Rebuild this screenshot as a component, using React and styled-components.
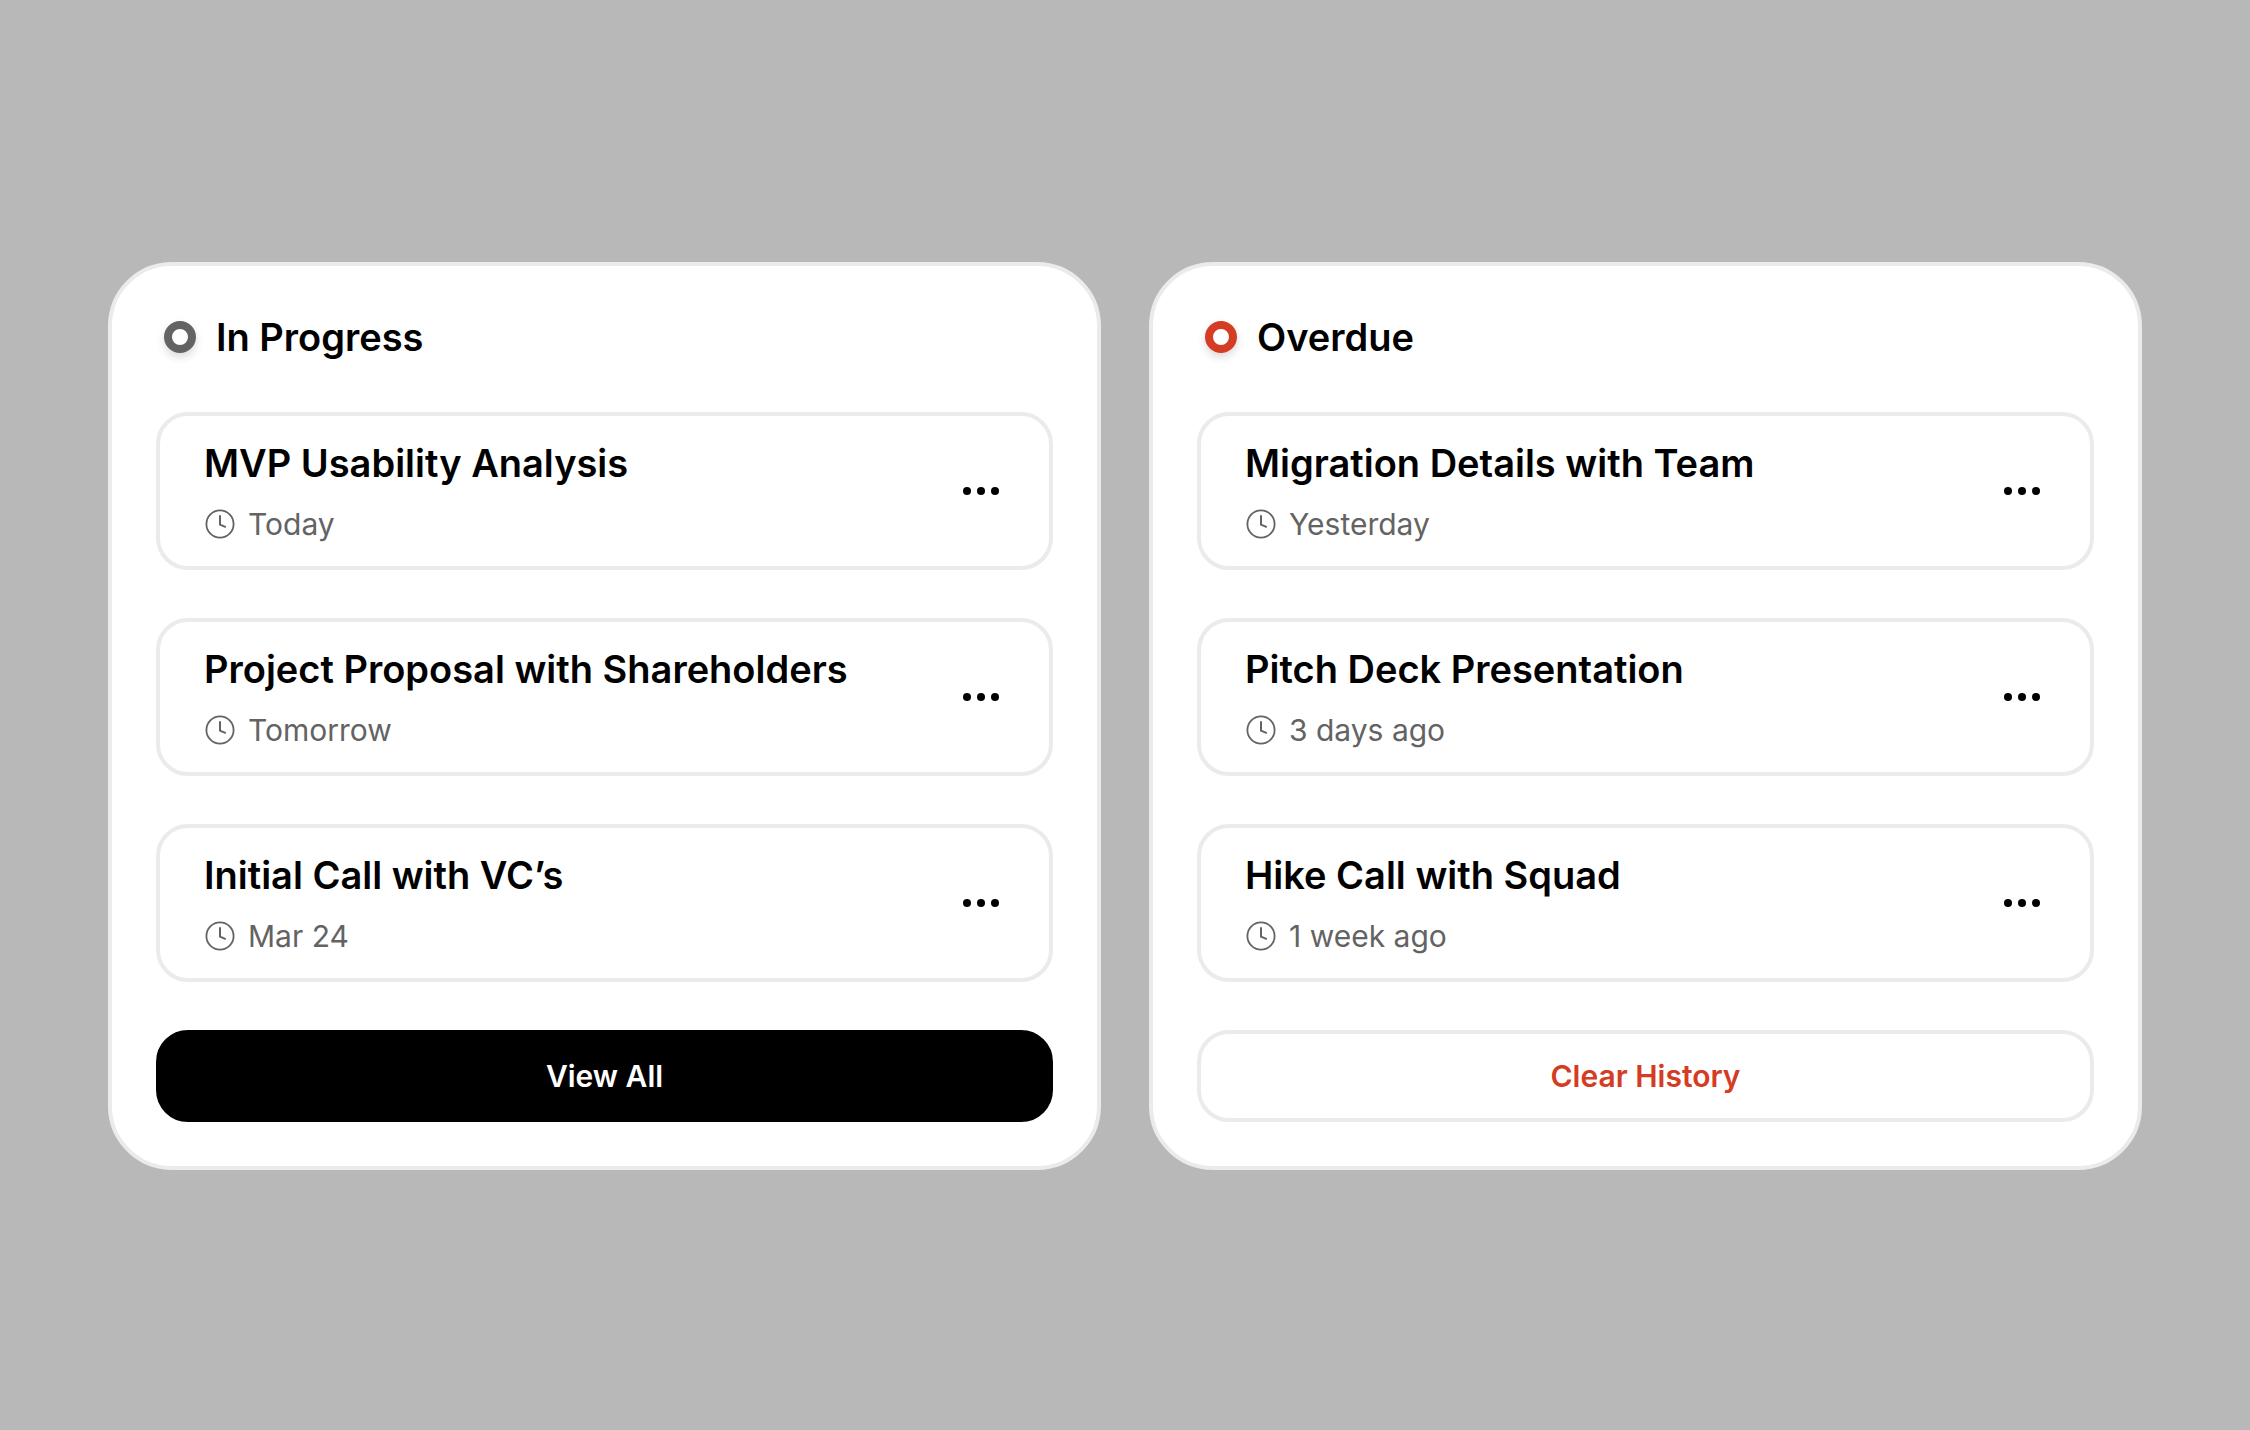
import React from 'react'
import styled, { createGlobalStyle } from 'styled-components'

const columns = [
    {
        "id": 0,
        "title": "In Progress",
        "color": "#636363",
        "action": "View All",
        "variant": "solid",
        "tasks": [
            { "id": 0, "title": "MVP Usability Analysis", "due": "Today" },
            { "id": 1, "title": "Project Proposal with Shareholders", "due": "Tomorrow" },
            { "id": 2, "title": "Initial Call with VC’s", "due": "Mar 24" }
        ]
    },
    {
        "id": 1,
        "title": "Overdue",
        "color": "#d43c24",
        "action": "Clear History",
        "variant": "outline",
        "tasks": [
            { "id": 3, "title": "Migration Details with Team", "due": "Yesterday" },
            { "id": 4, "title": "Pitch Deck Presentation", "due": "3 days ago" },
            { "id": 5, "title": "Hike Call with Squad", "due": "1 week ago" }
        ]
    }
]

const GlobalStyle = createGlobalStyle`
    * {
        box-sizing: border-box;
        margin: 0;
        padding: 0;
    }

    body {
        background: #b8b8b8;
        color: #000;
        font-family: "Inter", "Liberation Sans", sans-serif;
    }

    button {
        font-family: inherit;
        cursor: pointer;
    }
`
const Board = styled.main`
    min-height: 100vh;
    display: flex;
    align-items: center;
    gap: 48px;
    padding: 50px 108px 48px;

    @media(max-width: 1200px) {
        flex-direction: column;
        align-items: stretch;
        padding: 48px;
    }
`
const Card = styled.section`
    flex: 1;
    min-width: 0;
    display: flex;
    flex-direction: column;
    gap: 48px;
    padding: 44px;
    background: #fff;
    border: 4px solid #ebebeb;
    border-radius: 64px;
`
const CardHeader = styled.header`
    display: flex;
    align-items: center;
    gap: 20px;
    padding-left: 8px;
`
const Ring = styled.span`
    width: 32px;
    height: 32px;
    border: 8px solid ${props => props.$color};
    border-radius: 50%;
    box-shadow: 0 4px 8px rgba(0, 0, 0, 0.15);
`
const CardTitle = styled.h2`
    font-size: 38px;
    font-weight: 600;
    line-height: 54px;
`
const TaskList = styled.ul`
    display: flex;
    flex-direction: column;
    gap: 48px;
    list-style: none;
`
const Task = styled.li`
    display: flex;
    align-items: center;
    justify-content: space-between;
    padding: 20px 44px;
    border: 4px solid #ebebeb;
    border-radius: 32px;
`
const TaskInfo = styled.div`
    display: flex;
    flex-direction: column;
    gap: 12px;
`
const TaskTitle = styled.h3`
    font-size: 38px;
    font-weight: 600;
    line-height: 54px;
`
const Due = styled.p`
    display: flex;
    align-items: center;
    gap: 12px;
    color: #636363;
    font-size: 30px;
    line-height: 44px;
`
const MoreButton = styled.button`
    display: flex;
    width: 48px;
    height: 48px;
    border: none;
    background: none;
`
const ActionButton = styled.button`
    width: 100%;
    padding: 20px;
    border: 4px solid ${props => props.$variant === 'solid' ? '#000' : '#ebebeb'};
    border-radius: 32px;
    background: ${props => props.$variant === 'solid' ? '#000' : '#fff'};
    color: ${props => props.$variant === 'solid' ? '#fff' : '#d43c24'};
    font-size: 30px;
    font-weight: 600;
    line-height: 44px;
`

const ClockIcon = () => (
    <svg width="32" height="32" viewBox="0 0 32 32" fill="none" stroke="currentColor" strokeWidth="2" aria-hidden="true">
        <circle cx="16" cy="16" r="13.6" strokeWidth="1.8" />
        <path d="M16 7.2V16.6L21.8 19.2" />
    </svg>
)

const DotsIcon = () => (
    <svg width="48" height="48" viewBox="0 0 48 48" fill="currentColor" aria-hidden="true">
        <circle cx="10" cy="24" r="4" />
        <circle cx="24" cy="24" r="4" />
        <circle cx="38" cy="24" r="4" />
    </svg>
)

const App = () => {
    return (
        <>
            <GlobalStyle />
            <Board>
                {
                    columns.map(column => (
                        <Card key={column.id}>
                            <CardHeader>
                                <Ring $color={column.color} />
                                <CardTitle>{column.title}</CardTitle>
                            </CardHeader>
                            <TaskList>
                                {
                                    column.tasks.map(task => (
                                        <Task key={task.id}>
                                            <TaskInfo>
                                                <TaskTitle>{task.title}</TaskTitle>
                                                <Due><ClockIcon />{task.due}</Due>
                                            </TaskInfo>
                                            <MoreButton type="button" aria-label="More options">
                                                <DotsIcon />
                                            </MoreButton>
                                        </Task>
                                    ))
                                }
                            </TaskList>
                            <ActionButton type="button" $variant={column.variant}>{column.action}</ActionButton>
                        </Card>
                    ))
                }
            </Board>
        </>
    )
}

export default App
